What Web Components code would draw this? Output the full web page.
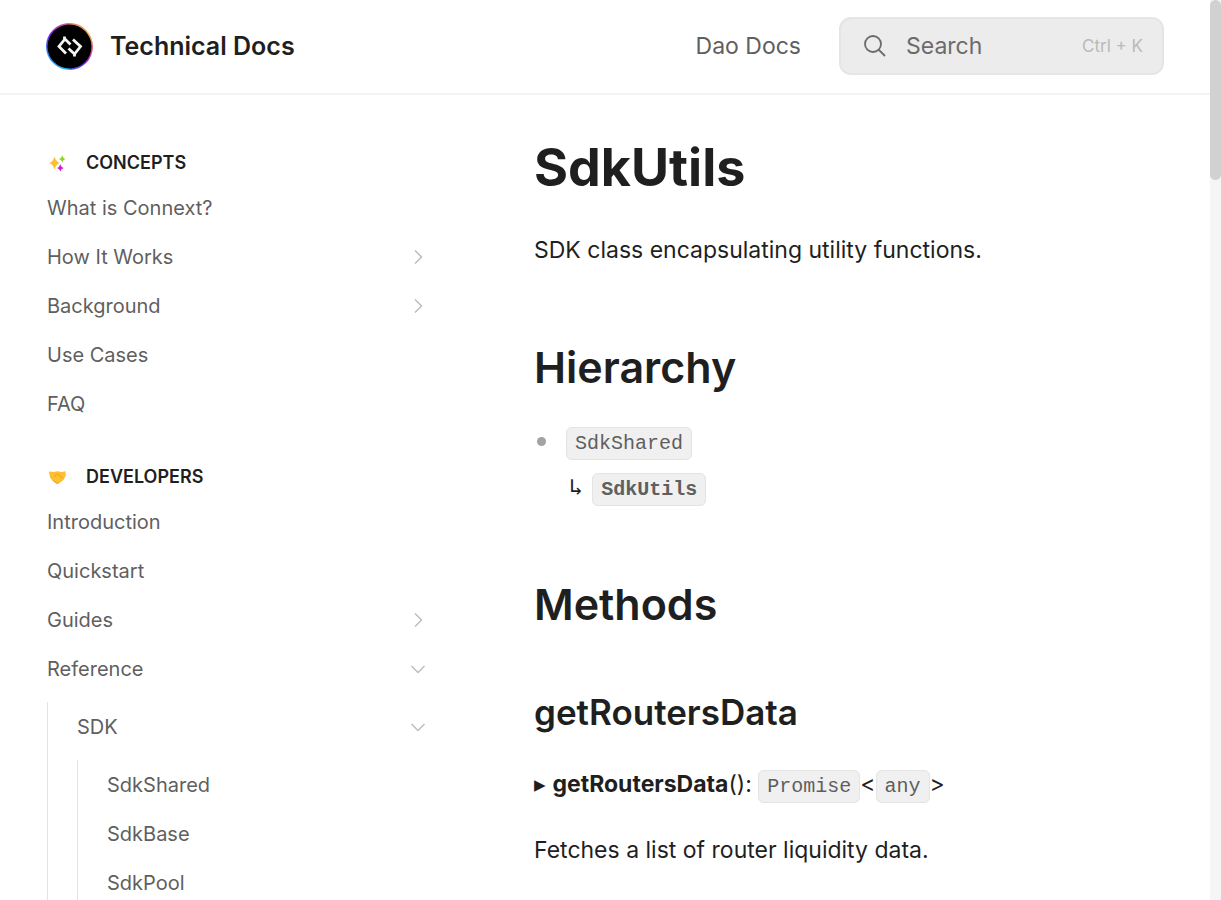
<!DOCTYPE html>
<html lang="en">
<head>
<meta charset="utf-8">
<meta name="viewport" content="width=device-width, initial-scale=1">
<title>SdkUtils - Technical Docs</title>
<style>
  :root {
    --text: #1f1f1f;
    --text-soft: #5f5f5f;
    --text-muted: #bababa;
    --line: #e3e3e3;
    --mono: "Liberation Mono", monospace;
  }
  html, body { margin: 0; height: 100%; overflow: hidden; }
  body { background: #fff; color: var(--text); font-family: Inter, sans-serif; }
</style>
</head>
<body>
<docs-app>
  <docs-header slot="header">
    <docs-brand slot="brand">Technical Docs</docs-brand>
    <header-link>Dao Docs</header-link>
    <search-button>Search</search-button>
  </docs-header>
  <nav-section slot="nav" heading="CONCEPTS">
    <sparkles-icon slot="icon"></sparkles-icon>
    <nav-item>What is Connext?</nav-item>
    <nav-item chevron="right">How It Works</nav-item>
    <nav-item chevron="right">Background</nav-item>
    <nav-item>Use Cases</nav-item>
    <nav-item>FAQ</nav-item>
  </nav-section>
  <nav-section slot="nav" heading="DEVELOPERS">
    <handshake-icon slot="icon"></handshake-icon>
    <nav-item>Introduction</nav-item>
    <nav-item>Quickstart</nav-item>
    <nav-item chevron="right">Guides</nav-item>
    <nav-item chevron="down">Reference</nav-item>
    <nav-group>
      <nav-item chevron="down">SDK</nav-item>
      <nav-group>
        <nav-item>SdkShared</nav-item>
        <nav-item>SdkBase</nav-item>
        <nav-item>SdkPool</nav-item>
      </nav-group>
    </nav-group>
  </nav-section>
  <docs-article></docs-article>
</docs-app>

<script>
  const define = (name, html, setup) => {
    const template = document.createElement('template');
    template.innerHTML = html.trim();
    customElements.define(name, class extends HTMLElement {
      constructor() {
        super();
        this.attachShadow({ mode: 'open' }).append(template.content.cloneNode(true));
      }
      connectedCallback() { if (setup) setup(this, this.shadowRoot); }
    });
  };

  define('docs-app', `
    <style>
      :host { display: flex; height: 100vh; }
      .page { flex: 1; min-width: 0; overflow: hidden; }
      .body { display: grid; grid-template-columns: 384px minmax(0, 1fr); column-gap: 103px; padding: 0 47px; }
      nav { display: flex; flex-direction: column; gap: 37px; padding-top: 56px; }
    </style>
    <div class="page">
      <slot name="header"></slot>
      <div class="body">
        <nav aria-label="Pages"><slot name="nav"></slot></nav>
        <main><slot></slot></main>
      </div>
    </div>
    <scroll-rail></scroll-rail>`);

  define('scroll-rail', `
    <style>
      :host { display: block; width: 11px; background: #f5f5f5; }
      div { height: 20%; border-radius: 6px; background: #d1d1d1; }
    </style>
    <div></div>`);

  define('docs-header', `
    <style>
      :host { display: block; border-bottom: 2px solid #f3f3f3; }
      header { display: flex; align-items: center; justify-content: space-between; height: 92px; padding: 0 46px 1px; }
      .tools { display: flex; align-items: center; gap: 38px; }
    </style>
    <header><slot name="brand"></slot><div class="tools"><slot></slot></div></header>`);

  define('docs-brand', `
    <style>
      :host { display: block; }
      a { display: flex; align-items: center; gap: 17px; color: var(--text); text-decoration: none; font-size: 25px; font-weight: 600; line-height: 32px; }
      svg { width: 47px; height: 48px; }
    </style>
    <a href="#">
      <svg viewBox="0 0 47 48" aria-hidden="true">
        <defs>
          <linearGradient id="l" x1="0" y1="0" x2="0" y2="1">
            <stop offset="0" stop-color="#c8607a"/><stop offset=".2" stop-color="#8a1cf0"/>
            <stop offset=".6" stop-color="#2f7df0"/><stop offset="1" stop-color="#2fb0f5"/>
          </linearGradient>
          <linearGradient id="r" x1="0" y1="0" x2="0" y2="1">
            <stop offset="0" stop-color="#e07a4a"/><stop offset=".25" stop-color="#f5b050"/>
            <stop offset=".6" stop-color="#e0508c"/><stop offset=".85" stop-color="#7a20e8"/><stop offset="1" stop-color="#4a60f0"/>
          </linearGradient>
        </defs>
        <path d="M23.500 1A23.500 23.500 0 0 0 23.500 48Z" fill="url(#l)"/>
        <path d="M23.500 1A23.500 23.500 0 0 1 23.500 48Z" fill="url(#r)"/>
        <circle cx="23.500" cy="24.500" r="22" fill="#000"/>
        <g fill="none" stroke="#f4f4f4" stroke-width="2.800">
          <path d="M20 31.500 13 24.500 19 17 24.500 22.500M18.500 14.500V18"/>
          <path d="M27 17.500 34.500 24.500 28.500 32 22.500 26.500M28.500 31V34.500"/>
        </g>
      </svg>
      <slot></slot>
    </a>`);

  define('header-link', `
    <style>
      :host { display: block; }
      a { color: var(--text-soft); text-decoration: none; font-size: 23px; line-height: 32px; }
    </style>
    <a href="#"><slot></slot></a>`);

  define('search-button', `
    <style>
      :host { display: block; width: 325px; }
      button { display: flex; align-items: center; gap: 19px; box-sizing: border-box; width: 100%; height: 58px; padding: 0 19px 0 22px; border: 2px solid #e5e5e5; border-radius: 12px; background: #ececec; color: #6b6b6b; font: 23px/32px Inter, sans-serif; }
      svg { width: 24px; height: 24px; }
      kbd { margin-left: auto; color: var(--text-muted); font: 17px/24px Inter, sans-serif; }
    </style>
    <button type="button">
      <svg viewBox="0 0 24 24" fill="none" stroke="currentColor" stroke-width="1.800" aria-hidden="true"><circle cx="10" cy="10" r="8"/><path d="M15.500 15.500 22 22"/></svg>
      <slot></slot><kbd>Ctrl + K</kbd>
    </button>`);

  define('nav-section', `
    <style>
      :host { display: block; }
      h2 { display: flex; align-items: center; gap: 17px; margin: 0; height: 24px; padding-bottom: 8px; color: var(--text); font-size: 18px; font-weight: 600; line-height: 24px; }
    </style>
    <h2><slot name="icon"></slot><span></span></h2>
    <slot></slot>`,
    (host, root) => { root.querySelector('span').textContent = host.getAttribute('heading'); });

  define('nav-item', `
    <style>
      :host { display: block; }
      a { display: flex; align-items: center; justify-content: space-between; height: 49px; padding-right: 4px; color: var(--text-soft); text-decoration: none; font-size: 20px; line-height: 28px; }
      svg { display: none; width: 18px; height: 18px; }
      :host([chevron]) svg { display: block; }
      :host([chevron="down"]) svg { transform: rotate(90deg); }
    </style>
    <a href="#"><slot></slot>
      <svg viewBox="0 0 18 18" fill="none" stroke="#bdbdbd" stroke-width="1.500" aria-hidden="true"><path d="M6 2.500 12.500 9 6 15.500"/></svg>
    </a>`);

  define('nav-group', `
    <style>
      :host { display: block; margin-top: 9px; padding-left: 29px; border-left: 1px solid var(--line); }
    </style>
    <slot></slot>`);

  define('sparkles-icon', `
    <style>:host { display: block; width: 22px; height: 22px; }</style>
    <svg width="22" height="22" viewBox="0 0 22 22" aria-hidden="true">
      <path fill="#fdbf2d" d="M7.500 4.500Q8.800 9.800 13 11 8.800 12.200 7.500 17.500 6.200 12.200 2 11 6.200 9.800 7.500 4.500Z"/>
      <path fill="#8fd42a" d="M15.300 3.500Q16 6.200 18.300 7 16 7.800 15.300 10.500 14.600 7.800 12 7 14.600 6.200 15.300 3.500Z"/>
      <path fill="#cf1fd4" d="M13.300 12.300Q14 15.200 16.800 16 14 16.800 13.300 19.500 12.600 16.800 10 16 12.600 15.200 13.300 12.300Z"/>
    </svg>`);

  define('handshake-icon', `
    <style>:host { display: block; width: 22px; height: 22px; }</style>
    <svg width="22" height="22" viewBox="0 0 22 22" aria-hidden="true">
      <path fill="#fcc02f" d="M2 5.500 6.500 6 10.500 5.300 14.500 6 18.500 5.200 18.800 9.500 16.500 14 12 17.300 9.500 17.800 5.500 14.500 3 11.500Z"/>
      <path fill="none" stroke="#e8981e" stroke-width=".8" d="M7 10.500 10.500 8 16 12.500M5.500 14.200 9.500 17.200 12 17"/>
    </svg>`);

  define('code-chip', `<style>
      :host { display: inline; }
      code { padding: 4px 8px; border: 1px solid #e4e4e4; border-radius: 6px; background: #f0f0f0; color: var(--text-soft); font-family: var(--mono); font-size: 20px; }
    </style><code><slot></slot></code>`);

  define('docs-article', `
    <style>
      :host { display: block; padding-top: 41px; font-size: 23px; line-height: 36px; }
      h1, h2, h3, p, ul { margin: 0; }
      h1 { font-size: 52px; font-weight: 700; line-height: 64px; }
      h2 { font-size: 43px; font-weight: 600; line-height: 56px; margin-top: 71px; }
      ul + h2 { margin-top: 68px; }
      h3 { font-size: 35px; font-weight: 600; line-height: 44px; margin-top: 58px; }
      p { margin-top: 27px; }
      h1 + p, h3 + p { margin-top: 32px; }
      ul { list-style: none; padding: 0; margin-top: 28px; }
      li { display: flex; align-items: flex-start; gap: 20px; }
      li::before { content: ""; width: 9px; height: 9px; margin: 14px 0 0 3px; border-radius: 50%; background: #a3a3a3; }
      li p { margin: 0; }
      li p + p { margin-top: 7px; }
      .arrow { margin: 0 3px; font-family: "DejaVu Sans Mono", monospace; }
    </style>
    <h1>SdkUtils</h1>
    <p>SDK class encapsulating utility functions.</p>
    <h2>Hierarchy</h2>
    <ul><li><div>
      <p><code-chip>SdkShared</code-chip></p>
      <p><span class="arrow">↳</span> <strong><code-chip>SdkUtils</code-chip></strong></p>
    </div></li></ul>
    <h2>Methods</h2>
    <h3>getRoutersData</h3>
    <p>▸ <strong>getRoutersData</strong>(): <code-chip>Promise</code-chip>&lt;<code-chip>any</code-chip>&gt;</p>
    <p>Fetches a list of router liquidity data.</p>`);
</script>
</body>
</html>
